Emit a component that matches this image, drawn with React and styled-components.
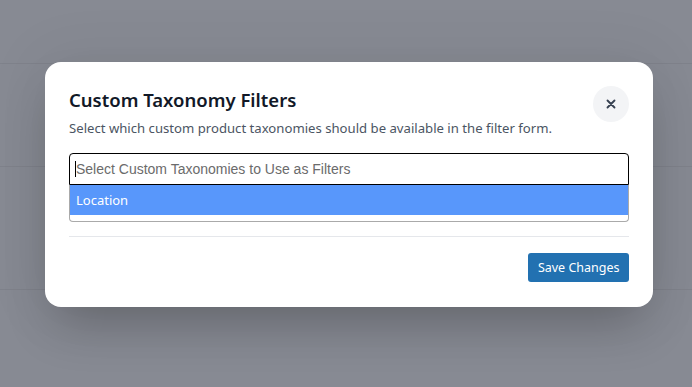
import styled, { createGlobalStyle } from 'styled-components';

// Global
const GlobalStyle = createGlobalStyle`
	html, body {
		margin: 0;
		padding: 0;
		height: 100%;
	}
	body {
		background: #878a93;
		font-family: 'Noto Sans', 'Open Sans', sans-serif;
	}
	#root {
		height: 100%;
	}
`;

// Style
const Page = styled.div`
	position: relative;
	width: 692px;
	height: 387px;
	overflow: hidden;
	background: #878a93;
`;

const Backdrop = styled.div`
	display: flex;
	flex-direction: column;
	padding-top: 63px;
`;

const PageRow = styled.div`
	height: ${(props) => props.h}px;
	border-top: 1px solid #7f828b;
`;

const Overlay = styled.div`
	position: absolute;
	inset: 0;
	display: flex;
	justify-content: center;
	align-items: flex-start;
	padding: 62px 0 0 6px;
`;

const Modal = styled.div`
	width: 608px;
	box-sizing: border-box;
	padding: 24px 24px 25px;
	background: #fff;
	border-radius: 16px;
	box-shadow: 0 25px 50px -12px rgba(0, 0, 0, 0.25), 0 0 60px 10px rgba(0, 0, 0, 0.05);
`;

const Header = styled.div`
	display: flex;
	justify-content: space-between;
	align-items: flex-start;
`;

const Title = styled.h2`
	margin: 0;
	font-size: 18.5px;
	line-height: 28px;
	font-weight: 600;
	color: #111827;
`;

const Subtitle = styled.p`
	margin: 4px 0 0;
	font-size: 13.15px;
	line-height: 20px;
	color: #4b5563;
`;

const CloseButton = styled.button`
	width: 36px;
	height: 36px;
	border: none;
	border-radius: 50%;
	background: #f3f4f6;
	display: flex;
	align-items: center;
	justify-content: center;
	padding: 0;
	color: #374151;
	cursor: pointer;
`;

const SelectWrap = styled.div`
	margin-top: 15px;
	font-family: 'Liberation Sans', Arial, sans-serif;
`;

const SearchBox = styled.div`
	height: 32px;
	box-sizing: border-box;
	border: 1px solid #000;
	border-radius: 4px 4px 0 0;
	display: flex;
	align-items: center;
	padding-left: 5px;
	font-size: 14px;
	color: #6b6b6b;
`;

const Caret = styled.span`
	display: inline-block;
	width: 1px;
	height: 16px;
	background: #000;
`;

const Dropdown = styled.div`
	border: 1px solid #aaa;
	border-top: none;
	border-radius: 0 0 4px 4px;
	padding-bottom: 6px;
`;

const Option = styled.div`
	height: 30px;
	display: flex;
	align-items: center;
	padding-left: 6px;
	font-family: 'Noto Sans', sans-serif;
	font-size: 13px;
	color: ${(props) => (props.active ? '#fff' : '#333')};
	background: ${(props) => (props.active ? '#5897fb' : '#fff')};
`;

const Divider = styled.hr`
	margin: 14px 0 0;
	border: none;
	border-top: 1px solid #e5e7eb;
`;

const Footer = styled.div`
	display: flex;
	justify-content: flex-end;
	margin-top: 16px;
`;

const SaveButton = styled.button`
	height: 29px;
	padding: 0 9.5px;
	border: none;
	border-radius: 3px;
	background: #2271b1;
	color: #fff;
	font-family: 'Noto Sans', sans-serif;
	font-size: 12.5px;
	cursor: pointer;
`;

// Render
export default function App() {
	return (
		<Page>
			<GlobalStyle />
			<Backdrop>
				<PageRow h={102} />
				<PageRow h={122} />
				<PageRow h={100} />
			</Backdrop>
			<Overlay>
				<Modal>
					<Header>
						<div>
							<Title>Custom Taxonomy Filters</Title>
							<Subtitle>
								Select which custom product taxonomies should be available in the filter form.
							</Subtitle>
						</div>
						<CloseButton aria-label="Close">
							<svg width="14" height="14" viewBox="0 0 24 24" fill="none" stroke="currentColor" strokeWidth="3.2" strokeLinecap="round">
								<path d="M6 6l12 12M18 6L6 18" />
							</svg>
						</CloseButton>
					</Header>
					<SelectWrap>
						<SearchBox>
							<Caret />
							Select Custom Taxonomies to Use as Filters
						</SearchBox>
						<Dropdown>
							<Option active>Location</Option>
						</Dropdown>
					</SelectWrap>
					<Divider />
					<Footer>
						<SaveButton>Save Changes</SaveButton>
					</Footer>
				</Modal>
			</Overlay>
		</Page>
	);
}
